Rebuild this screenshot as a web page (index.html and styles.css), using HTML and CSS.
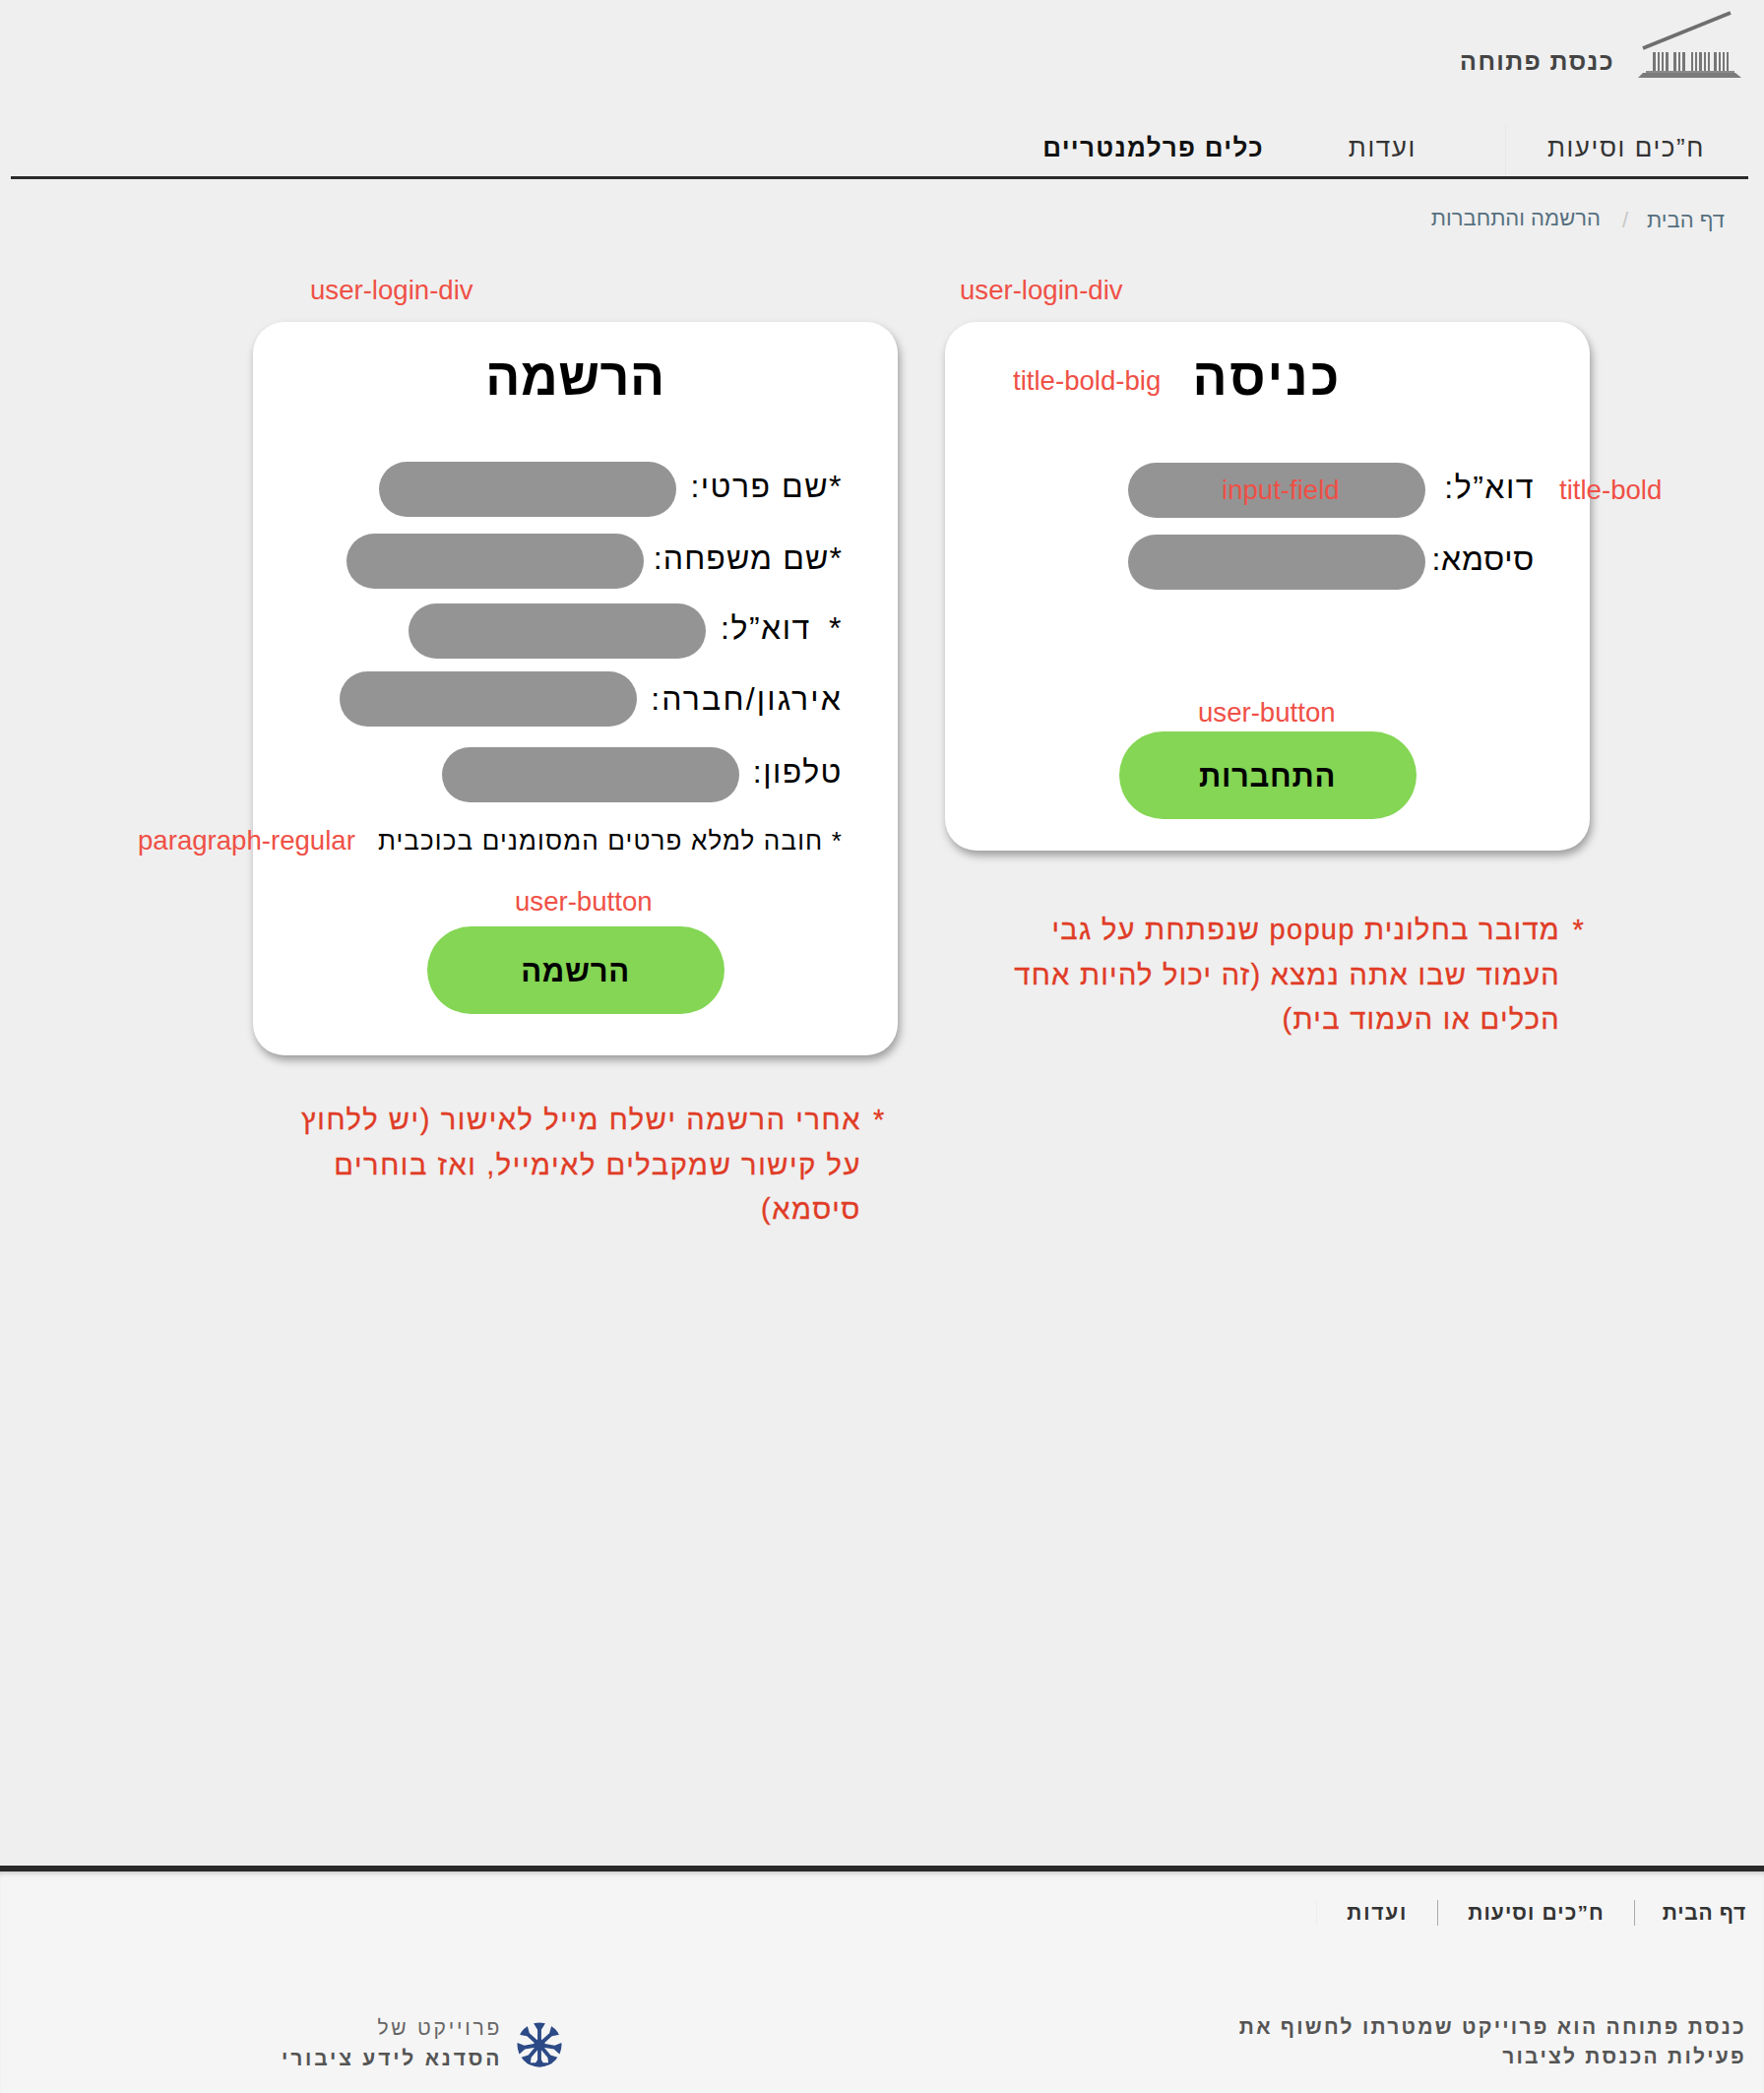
FILE: index.html
```html
<!DOCTYPE html>
<html lang="he" dir="rtl">
<head>
    <meta charset="UTF-8" />
    <meta name="viewport" content="width=device-width, initial-scale=1" />
    <title>כנסת פתוחה</title>
    <link rel="stylesheet" href="styles.css">
</head>
<body>
    <header class="site-header">
        <div class="brand">
            <svg class="brand-logo" viewBox="0 0 112 76" width="112" height="76" aria-hidden="true">
                <path d="M9 41 L98 5" stroke="#6e6e6e" stroke-width="3.6" fill="none" />
                <g fill="#777">
                    <rect x="19" y="45" width="3" height="19" /><rect x="24" y="45" width="2" height="19" /><rect x="28" y="45" width="2" height="19" /><rect x="32" y="45" width="3" height="19" />
                    <rect x="40" y="45" width="3" height="19" /><rect x="45" y="45" width="2" height="19" /><rect x="49" y="45" width="3" height="19" />
                    <rect x="58" y="45" width="2" height="19" /><rect x="62" y="45" width="2" height="19" /><rect x="66" y="45" width="3" height="19" /><rect x="71" y="45" width="2" height="19" /><rect x="75" y="45" width="2" height="19" />
                    <rect x="81" y="45" width="3" height="19" /><rect x="86" y="45" width="2" height="19" /><rect x="90" y="45" width="2" height="19" /><rect x="94" y="45" width="2" height="19" />
                </g>
                <rect x="12" y="64" width="90" height="2.5" fill="#8a8a8a" />
                <path d="M4 71 L9 66 H103 L109 71 Z" fill="#7b7b7b" />
            </svg>
            <span class="brand-name">כנסת פתוחה</span>
        </div>
        <nav class="tabs">
            <a class="tab tab-first">ח”כים וסיעות</a>
            <a class="tab tab-mid">ועדות</a>
            <a class="tab tab-active">כלים פרלמנטריים</a>
        </nav>
        <div class="crumbs">
            <a>דף הבית</a>
            <span class="crumb-sep">/</span>
            <span class="crumb-current">הרשמה והתחברות</span>
        </div>
    </header>

    <main class="forms">
        <section class="column">
            <div class="user-card login-card">
                <span class="note note-div">user-login-div</span>
                <span class="note note-big">title-bold-big</span>
                <span class="note note-input">input-field</span>
                <span class="note note-bold">title-bold</span>
                <span class="note note-btn">user-button</span>
                <h2 class="card-title">כניסה</h2>
                <div class="field fixed"><label>דוא”ל:</label><div class="input"></div></div>
                <div class="field fixed"><label>סיסמא:</label><div class="input"></div></div>
                <button class="user-button">התחברות</button>
            </div>
            <p class="remark">
                <span class="star">*</span>מדובר בחלונית popup שנפתחת על גבי<br>
                העמוד שבו אתה נמצא (זה יכול להיות אחד<br>
                הכלים או העמוד בית)
            </p>
        </section>

        <section class="column">
            <div class="user-card register-card">
                <span class="note note-div">user-login-div</span>
                <span class="note note-para">paragraph-regular</span>
                <span class="note note-btn">user-button</span>
                <h2 class="card-title">הרשמה</h2>
                <div class="field"><label>*שם פרטי:</label><div class="input"></div></div>
                <div class="field"><label>*שם משפחה:</label><div class="input"></div></div>
                <div class="field"><label>*&#8201; דוא”ל:</label><div class="input"></div></div>
                <div class="field"><label>אירגון/חברה:</label><div class="input"></div></div>
                <div class="field"><label>טלפון:</label><div class="input"></div></div>
                <p class="required">* חובה למלא פרטים המסומנים בכוכבית</p>
                <button class="user-button">הרשמה</button>
            </div>
            <p class="remark">
                <span class="star">*</span>אחרי הרשמה ישלח מייל לאישור (יש ללחוץ<br>
                על קישור שמקבלים לאימייל, ואז בוחרים<br>
                סיסמא)
            </p>
        </section>
    </main>

    <footer class="site-footer">
        <div class="footer-links">
            <a>דף הבית</a>
            <a>ח”כים וסיעות</a>
            <a>ועדות</a>
        </div>
        <div class="footer-bottom">
            <p class="about">כנסת פתוחה הוא פרוייקט שמטרתו לחשוף את<br>פעילות הכנסת לציבור</p>
            <div class="hasadna">
                <svg class="hasadna-logo" viewBox="-24 -24 48 48" width="46" height="46" aria-hidden="true">
                    <defs>
                        <clipPath id="disc"><circle r="23.5" /></clipPath>
                        <path id="spoke" d="M-2 0 L-2 -16 L-7 -24 L7 -24 L2 -16 L2 0 Z" />
                    </defs>
                    <g clip-path="url(#disc)" fill="#2c4a86">
                        <use href="#spoke" />
                        <use href="#spoke" transform="rotate(48)" />
                        <use href="#spoke" transform="rotate(-48)" />
                        <use href="#spoke" transform="rotate(100)" />
                        <use href="#spoke" transform="rotate(-100)" />
                        <use href="#spoke" transform="rotate(140)" />
                        <use href="#spoke" transform="rotate(-140)" />
                        <use href="#spoke" transform="rotate(180)" />
                        <circle r="6" />
                        <path d="M-15 19 H15 L12 24 H-12 Z" />
                    </g>
                </svg>
                <div class="hasadna-text">
                    <div>פרוייקט של</div>
                    <strong>הסדנא לידע ציבורי</strong>
                </div>
            </div>
        </div>
    </footer>
</body>
</html>
```

FILE: styles.css
```css
html, body {
    margin: 0;
    height: 100%;
}
body {
    background-color: #efefef;
    font-family: "Liberation Sans", "DejaVu Sans", sans-serif;
    color: #000;
    display: flex;
    flex-direction: column;
    min-height: 2126px;
}

/* header */
.site-header {
    height: 327px;
    flex-shrink: 0;
}
.brand {
    height: 126px;
    display: flex;
    align-items: flex-start;
    padding-right: 20px;
}
.brand-logo {
    margin-top: 8px;
    filter: blur(0.6px);
}
.brand-name {
    margin-top: 44px;
    margin-right: 20px;
    font-size: 25px;
    line-height: 36px;
    font-weight: bold;
    letter-spacing: 1.4px;
    color: #444;
}
.tabs {
    margin: 0 16px 0 11px;
    height: 53px;
    display: flex;
    align-items: stretch;
    border-bottom: 3px solid #2b2b2b;
    font-size: 26px;
    color: #333;
}
.tab {
    display: flex;
    align-items: center;
    padding-bottom: 4px;
}
.tab-first {
    padding: 0 44px 4px 42px;
    border-left: 1px solid #e8e8e8;
    letter-spacing: 1.6px;
}
.tab-mid {
    padding: 0 90px 4px 86px;
    letter-spacing: 1.6px;
}
.tab-active {
    font-weight: bold;
    color: #111;
    letter-spacing: 1.3px;
}
.crumbs {
    margin-top: 27px;
    padding-right: 40px;
    display: flex;
    align-items: center;
    font-size: 22px;
    line-height: 30px;
    color: #56707f;
}
.crumb-sep {
    margin: 0 19px 0 22px;
    color: #c8c8c8;
}
.crumb-current {
    margin-top: -4px;
}

/* cards */
.forms {
    display: flex;
    align-items: flex-start;
    gap: 48px;
    padding-right: 177px;
}
.column {
    width: 655px;
}
.user-card {
    position: relative;
    box-sizing: border-box;
    background: #fff;
    border-radius: 32px;
    padding: 26px 56px 32px;
    box-shadow: 2px 5px 9px rgba(0, 0, 0, 0.35);
}
.register-card {
    padding-bottom: 42px;
}
.card-title {
    margin: 0 0 56px;
    font-size: 52px;
    line-height: 60px;
    font-weight: bold;
    text-align: center;
    letter-spacing: 0.5px;
}
.login-card .card-title {
    margin-bottom: 57px;
    letter-spacing: 3px;
}
.field {
    display: flex;
    align-items: center;
    gap: 14px;
    margin-bottom: 17px;
    font-size: 32px;
}
.field label {
    margin-bottom: 6px;
    white-space: nowrap;
    letter-spacing: 1.5px;
}
.field.fixed label {
    width: 97px;
}
.login-card .field:nth-of-type(2) label {
    letter-spacing: 0.7px;
}
.input {
    width: 302px;
    height: 56px;
    border-radius: 28px;
    background: #949494;
    flex-shrink: 0;
}
.register-card .field:nth-of-type(2) { margin-bottom: 15px; gap: 10px; }
.register-card .field:nth-of-type(2) label { letter-spacing: 1.1px; }
.register-card .field:nth-of-type(3) { margin-bottom: 13px; gap: 15px; }
.register-card .field:nth-of-type(4) { margin-bottom: 21px; gap: 14px; }
.register-card .field:nth-of-type(4) label {
    margin-bottom: 0;
    letter-spacing: 2.2px;
}
.required {
    margin: 24px 0 0;
    font-size: 26px;
    line-height: 30px;
    letter-spacing: 1.15px;
}
.user-button {
    display: block;
    width: 302px;
    height: 89px;
    margin: 72px auto 0;
    padding: 2px 0 0;
    border: none;
    border-radius: 45px;
    background: #84d654;
    font-family: inherit;
    font-size: 31px;
    font-weight: bold;
    letter-spacing: 0.7px;
    color: #000;
}
.login-card .user-button {
    margin-top: 144px;
}
.register-card .user-button {
    margin-top: 72px;
}
.remark {
    position: relative;
    margin: 58px 5px 0 0;
    padding-right: 25px;
    font-size: 29px;
    line-height: 45.5px;
    letter-spacing: 1.3px;
    white-space: nowrap;
    color: #e03c26;
    -webkit-text-stroke: 0.3px #e03c26;
}
.register-card + .remark {
    margin: 43px 12px 0 0;
    letter-spacing: 1.6px;
}
.star {
    position: absolute;
    right: 0;
    top: 0;
}

/* red annotations over the design */
.note {
    position: absolute;
    direction: ltr;
    white-space: nowrap;
    font-size: 27.6px;
    line-height: 34px;
    color: #ef5046;
}
.note-div { top: -49px; }
.login-card .note-div { left: 15px; }
.register-card .note-div { left: 58px; }
.note-big { left: 69px; top: 43px; }
.note-input { left: 281px; top: 154px; }
.note-bold { left: 624px; top: 154px; }
.login-card .note-btn { left: 257px; top: 380px; }
.register-card .note-btn { left: 266px; top: 572px; }
.note-para { left: -117px; top: 510px; }

/* footer */
.site-footer {
    margin-top: auto;
    height: 231px;
    flex-shrink: 0;
    box-sizing: border-box;
    background: #f5f5f5;
    border-top: 6px solid #2a2a2a;
    box-shadow: inset 0 5px 5px -3px rgba(0, 0, 0, 0.18);
}
.footer-links {
    display: flex;
    padding: 29px 18px 0 0;
    font-size: 21px;
    line-height: 26px;
    font-weight: bold;
    letter-spacing: 1.1px;
    color: #333;
}
.footer-links a {
    padding-left: 30px;
    margin-left: 30px;
    border-left: 1px solid #aaa;
}
.footer-links a:first-child {
    padding-left: 28px;
    letter-spacing: 0.7px;
}
.footer-links a:last-child {
    border-left-color: #eee;
    letter-spacing: 1.8px;
}
.footer-bottom {
    display: flex;
    justify-content: space-between;
    align-items: flex-start;
    padding: 88px 18px 0 0;
}
.about {
    margin: 0;
    font-size: 21px;
    line-height: 30px;
    font-weight: bold;
    letter-spacing: 2.25px;
    color: #555;
}
.hasadna {
    display: flex;
    align-items: center;
    gap: 15px;
    margin-left: 286px;
}
.hasadna-logo {
    margin-top: 4px;
    filter: blur(0.5px);
}
.hasadna-text {
    font-size: 21px;
    line-height: 31px;
    letter-spacing: 2.8px;
    color: #666;
}
.hasadna-text strong {
    color: #555;
}
```
